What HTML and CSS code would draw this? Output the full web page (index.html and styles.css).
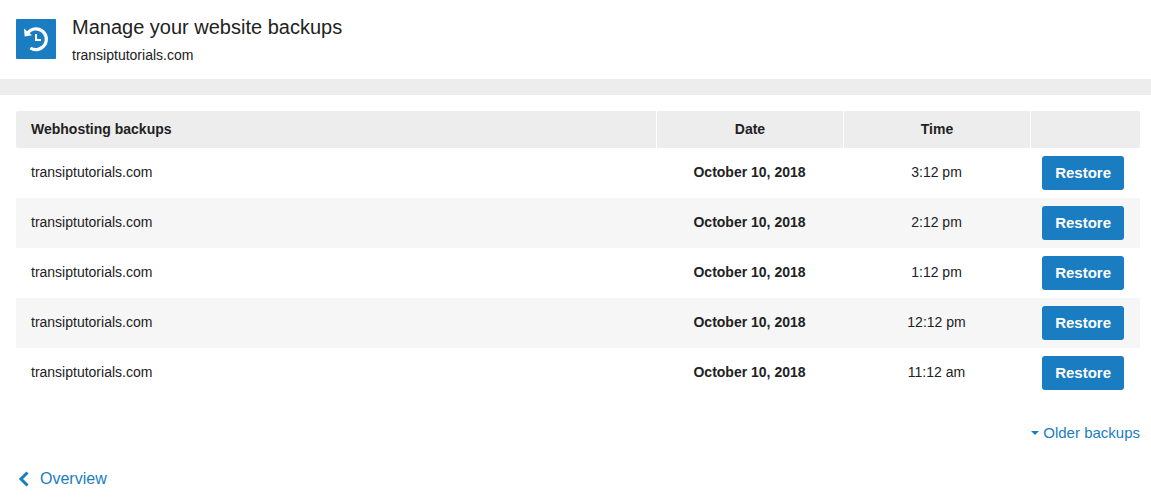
FILE: index.html
```html
<!DOCTYPE html>
<html lang="en">
<head>
<meta charset="utf-8">
<title>Manage your website backups</title>
<link rel="stylesheet" href="styles.css">
</head>
<body>
<header class="page-header">
  <svg class="page-icon" viewBox="0 0 40 40" aria-hidden="true">
    <rect width="40" height="40" rx="1" fill="#1a7dc1"/>
    <path d="M11.4 14.3A10.4 10.4 0 1 1 14.4 29" fill="none" stroke="#fff" stroke-width="3.2"/>
    <path d="M8 9.4L16 16.2L8.6 17.4Z" fill="#fff"/>
    <path d="M20 15V21H25" fill="none" stroke="#fff" stroke-width="2"/>
  </svg>
  <div class="page-heading">
    <h1 class="page-title">Manage your website backups</h1>
    <p class="page-domain">transiptutorials.com</p>
  </div>
</header>
<main class="content">
  <table class="backups">
    <colgroup>
      <col>
      <col class="col-date">
      <col class="col-time">
      <col class="col-action">
    </colgroup>
    <thead>
      <tr><th class="name" scope="col">Webhosting backups</th><th scope="col">Date</th><th scope="col">Time</th><th></th></tr>
    </thead>
    <tbody>
      <tr><td class="name">transiptutorials.com</td><td class="date">October 10, 2018</td><td>3:12 pm</td><td class="action"><button class="restore" type="button">Restore</button></td></tr>
      <tr><td class="name">transiptutorials.com</td><td class="date">October 10, 2018</td><td>2:12 pm</td><td class="action"><button class="restore" type="button">Restore</button></td></tr>
      <tr><td class="name">transiptutorials.com</td><td class="date">October 10, 2018</td><td>1:12 pm</td><td class="action"><button class="restore" type="button">Restore</button></td></tr>
      <tr><td class="name">transiptutorials.com</td><td class="date">October 10, 2018</td><td>12:12 pm</td><td class="action"><button class="restore" type="button">Restore</button></td></tr>
      <tr><td class="name">transiptutorials.com</td><td class="date">October 10, 2018</td><td>11:12 am</td><td class="action"><button class="restore" type="button">Restore</button></td></tr>
    </tbody>
  </table>
  <div class="older">
    <a class="link older-link" href="#older"><svg class="caret" viewBox="0 0 8 4" aria-hidden="true"><path d="M0 0H8L4 4Z" fill="currentColor"/></svg>Older backups</a>
  </div>
  <nav>
    <a class="link overview-link" href="#overview"><svg class="chevron" viewBox="0 0 16 16" aria-hidden="true"><path d="M11.5 1.5L5 8L11.5 14.5" fill="none" stroke="currentColor" stroke-width="3"/></svg>Overview</a>
  </nav>
</main>
</body>
</html>
```
FILE: styles.css
```css
body {
  margin: 0;
  background: #fff;
  color: #222;
  font: 14px/20px "Liberation Sans", Arial, sans-serif;
}

.page-header {
  display: flex;
  gap: 16px;
  padding: 15px 16px 14px;
  border-bottom: 16px solid #ededed;
}

.page-icon {
  flex: none;
  width: 40px;
  height: 40px;
  margin-top: 4px;
}

.page-title {
  margin: 0;
  font-size: 20px;
  line-height: 24px;
  font-weight: 400;
}

.page-domain {
  margin: 6px 0 0;
}

.content {
  padding: 16px 11px 16px 16px;
}

.backups {
  width: 100%;
  table-layout: fixed;
  border-collapse: separate;
  border-spacing: 0;
  text-align: center;
}

.col-date,
.col-time {
  width: 187px;
}

.col-action {
  width: 110px;
}

.backups th,
.backups td {
  box-sizing: border-box;
  padding: 0 0 2px;
}

.backups th {
  height: 37px;
  background: #ededed;
}

.backups th + th {
  border-left: 1px solid #fff;
}

.backups th:first-child {
  border-radius: 2px 0 0 2px;
}

.backups th:last-child {
  border-radius: 0 2px 2px 0;
}

.backups td {
  height: 50px;
}

.backups tbody tr:nth-child(even) {
  background: #f6f6f6;
}

.backups .name {
  padding-left: 15px;
  text-align: left;
}

.backups .date {
  font-weight: 700;
}

.backups .action {
  padding: 0 16px 0 0;
  text-align: right;
}

.restore {
  display: inline-block;
  height: 34px;
  padding: 0 13px;
  border: 0;
  border-radius: 3px;
  background: #1a7dc1;
  color: #fff;
  font: 700 15px/34px "Liberation Sans", Arial, sans-serif;
  vertical-align: middle;
  cursor: pointer;
}

.link {
  display: inline-flex;
  align-items: center;
  color: #1a7dc1;
  text-decoration: none;
}

.older {
  display: flex;
  justify-content: flex-end;
  margin-top: 25px;
}

.older-link {
  gap: 4px;
  font-size: 15px;
}

.caret {
  width: 8px;
  height: 4px;
}

.overview-link {
  gap: 8px;
  margin-top: 26px;
  font-size: 16px;
}

.chevron {
  width: 16px;
  height: 16px;
}
```
